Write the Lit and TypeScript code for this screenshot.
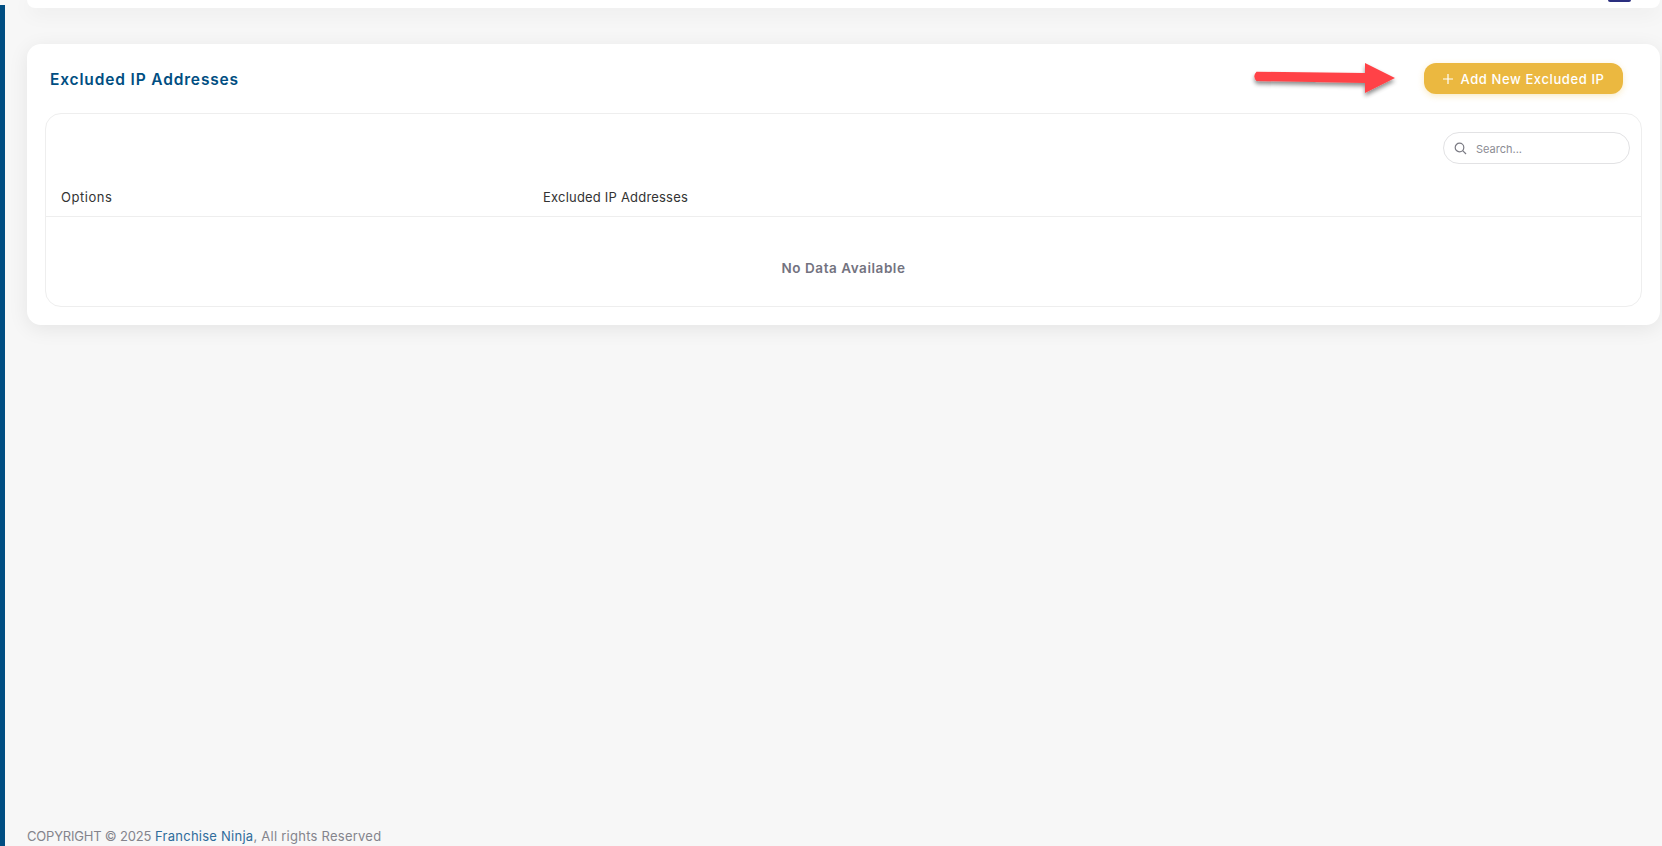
import { LitElement, html, css } from 'lit';
import { customElement } from 'lit/decorators.js';

@customElement('app-root')
export class AppRoot extends LitElement {
  static styles = css`
    :host {
      display: block;
      height: 846px;
      overflow: hidden;
      background: #f7f7f7;
      font-family: Inter, 'Noto Sans', sans-serif;
      color: #333;
    }

    .shell {
      display: flex;
      height: 846px;
    }

    .rail {
      width: 5px;
      margin-top: 5px;
      background: #004e82;
      flex: none;
    }

    .content {
      flex: 1;
      min-width: 0;
      display: flex;
      flex-direction: column;
      padding: 0 2px 0 22px;
    }

    .card {
      background: #fff;
      border-radius: 14px;
      box-shadow: 0 4px 20px rgba(0, 0, 0, 0.08);
    }

    .top-card {
      height: 8px;
      flex: none;
      display: flex;
      justify-content: flex-end;
      align-items: flex-start;
      padding-right: 29px;
      border-radius: 0 0 14px 14px;
    }

    .top-badge {
      width: 23px;
      height: 2px;
      background: #2b2f7f;
      border-radius: 0 0 8px 8px;
    }

    .main-card {
      margin-top: 36px;
      height: 281px;
      flex: none;
      box-sizing: border-box;
      padding: 19px 18px 18px;
      display: flex;
      flex-direction: column;
    }

    .card-head {
      display: flex;
      align-items: center;
      justify-content: space-between;
      height: 31px;
      padding: 0 19px 0 5px;
      flex: none;
    }

    h2 {
      margin: 0;
      padding-top: 1px;
      font-size: 15.5px;
      font-weight: 600;
      letter-spacing: 0.85px;
      color: #004e82;
    }

    .actions {
      display: flex;
      align-items: center;
      gap: 29px;
    }

    .arrow {
      overflow: visible;
      flex: none;
    }

    .add-btn {
      display: flex;
      align-items: center;
      justify-content: center;
      gap: 6px;
      width: 199px;
      height: 31px;
      border: 0;
      padding: 0;
      border-radius: 12px;
      background: #ebb840;
      color: #fff;
      font: 500 13px Inter, 'Noto Sans', sans-serif;
      letter-spacing: 0.6px;
      box-shadow: 0 2px 6px rgba(235, 184, 64, 0.3);
    }

    .table-box {
      margin-top: 19px;
      flex: 1;
      border: 1px solid #eeeeee;
      border-radius: 16px;
      display: flex;
      flex-direction: column;
    }

    .toolbar {
      display: flex;
      justify-content: flex-end;
      padding: 18px 11px 0 0;
      flex: none;
    }

    .search {
      box-sizing: border-box;
      width: 187px;
      height: 32px;
      display: flex;
      align-items: center;
      gap: 9px;
      padding-left: 10px;
      border: 1px solid #e2e2e4;
      border-radius: 16px;
      font-size: 11px;
      color: #8c8c94;
    }

    .search span {
      padding-top: 1px;
    }

    .thead {
      box-sizing: border-box;
      display: grid;
      grid-template-columns: 482px 1fr;
      align-items: center;
      height: 53px;
      padding: 14px 0 0 15px;
      border-bottom: 1px solid #eeeeee;
      font-size: 13px;
      letter-spacing: 0.2px;
      color: #333;
      flex: none;
    }

    .thead .first {
      letter-spacing: 0.55px;
    }

    .empty {
      flex: 1;
      display: flex;
      align-items: center;
      justify-content: center;
      padding-top: 12px;
      font-size: 13.5px;
      font-weight: 600;
      letter-spacing: 0.55px;
      color: #73737f;
    }

    footer {
      margin-top: auto;
      margin-bottom: 1px;
      height: 18px;
      font-size: 13px;
      line-height: 18px;
      letter-spacing: 0.25px;
      color: #84848c;
      white-space: nowrap;
    }

    footer .caps {
      letter-spacing: -0.2px;
    }

    footer a {
      color: #2f6c9b;
      text-decoration: none;
    }
  `;

  render() {
    return html`
      <div class="shell">
        <div class="rail"></div>
        <div class="content">
          <div class="card top-card"><div class="top-badge"></div></div>
          <section class="card main-card">
            <div class="card-head">
              <h2>Excluded IP Addresses</h2>
              <div class="actions">
                <svg class="arrow" width="142" height="31" viewBox="0 0 142 31">
                  <defs>
                    <filter id="arrow-shadow" x="-10%" y="-30%" width="120%" height="170%">
                      <feDropShadow dx="0" dy="3" stdDeviation="2" flood-color="#000" flood-opacity="0.45"></feDropShadow>
                    </filter>
                  </defs>
                  <path d="M3.500 8.700 L112 10 L112 0 L142 15 L112 30 L112 20 L3.500 18 Q-1 13.300 3.500 8.700Z" fill="#ff4346" filter="url(#arrow-shadow)"></path>
                </svg>
                <button class="add-btn">
                  <svg width="12" height="12" viewBox="0 0 12 12"><path d="M6 1v10M1 6h10" stroke="#fff" stroke-width="1.200"></path></svg>
                  Add New Excluded IP
                </button>
              </div>
            </div>
            <div class="table-box">
              <div class="toolbar">
                <div class="search">
                  <svg width="13" height="13" viewBox="0 0 13 13" fill="none" stroke="#7b7b84" stroke-width="1.200"><circle cx="5.500" cy="5.500" r="4.300"></circle><path d="M8.700 8.700 12 12"></path></svg>
                  <span>Search...</span>
                </div>
              </div>
              <div class="thead"><span class="first">Options</span><span>Excluded IP Addresses</span></div>
              <div class="empty">No Data Available</div>
            </div>
          </section>
          <footer><span class="caps">COPYRIGHT © 2025</span> <a>Franchise Ninja</a>, All rights Reserved</footer>
        </div>
      </div>
    `;
  }
}

declare global {
  interface HTMLElementTagNameMap {
    'app-root': AppRoot;
  }
}
